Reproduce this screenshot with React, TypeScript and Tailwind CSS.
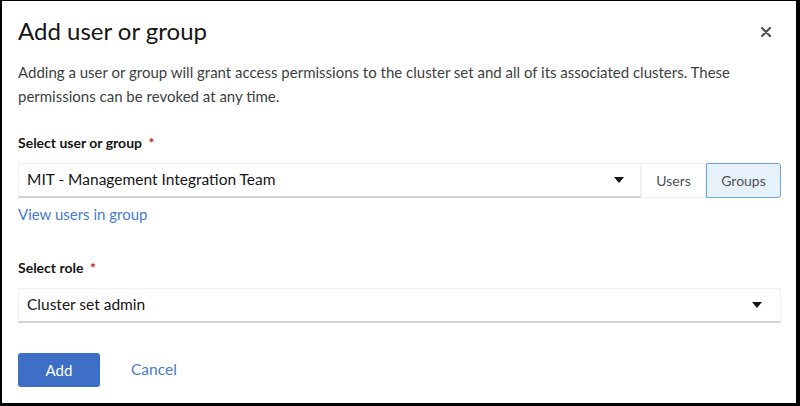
import React, { useState } from 'react';

function Caret() {
  return (
    <svg width="10" height="6" viewBox="0 0 10 6" className="text-[#151515]">
      <path d="M0 0h10L5 6z" fill="currentColor" />
    </svg>
  );
}

function Label({ text }: { text: string }) {
  return (
    <div className="text-[14px] font-bold text-[#151515] leading-[20px] mb-[10px]">
      {text} <span className="text-[#c9190b] ml-[3px]">*</span>
    </div>
  );
}

export default function App() {
  const [kind, setKind] = useState<'users' | 'groups'>('groups');

  return (
    <div
      className="w-[800px] h-[406px] bg-white border-black border-l-2 border-t border-r-4 border-b-[3px] overflow-hidden"
      style={{ fontFamily: 'Lato, "Noto Sans", sans-serif' }}
    >
      <div className="pl-4 pr-[15px] pt-[14px]">
        {/* header */}
        <div className="flex items-center justify-between">
          <h1 className="text-[24px] leading-[32px] text-[#151515]">Add user or group</h1>
          <button className="mr-[10px] mt-[1px] text-[#4f5255]">
            <svg width="10" height="10" viewBox="0 0 10 10">
              <path d="M1 1l8 8M9 1l-8 8" stroke="currentColor" strokeWidth="2.2" strokeLinecap="round" />
            </svg>
          </button>
        </div>

        <p className="mt-[13px] text-[15px] leading-[24px] text-[#3c3f42]">
          Adding a user or group will grant access permissions to the cluster set and all of its associated clusters. These
          permissions can be revoked at any time.
        </p>

        {/* user or group */}
        <div className="mt-[25px]">
          <Label text="Select user or group" />
          <div className="flex">
            <div className="flex-1 h-[35px] flex items-center justify-between pl-[8px] pr-[16px] border border-[#f0f0f0] border-b-[#d2d2d2] border-b-2 text-[15.5px] text-[#151515]">
              <span>MIT - Management Integration Team</span>
              <Caret />
            </div>
            <button
              onClick={() => setKind('users')}
              className={`w-[65px] h-[35px] text-[14px] text-[#4f5255] border ${kind === 'users' ? 'bg-[#e7f1fa] border-[#73a5e0]' : 'border-[#f0f0f0]'}`}
            >
              Users
            </button>
            <button
              onClick={() => setKind('groups')}
              className={`w-[75px] h-[35px] text-[14px] text-[#4f5255] border rounded-r-[3px] ${kind === 'groups' ? 'bg-[#e7f1fa] border-[#73a5e0]' : 'border-[#f0f0f0]'}`}
            >
              Groups
            </button>
          </div>
          <a className="block mt-[6px] text-[15px] leading-[20px] text-[#4a7bd0]">View users in group</a>
        </div>

        {/* role */}
        <div className="mt-[34px]">
          <Label text="Select role" />
          <div className="h-[35px] flex items-center justify-between pl-[8px] pr-[18px] border border-[#f0f0f0] border-b-[#d2d2d2] border-b-2 text-[15.5px] text-[#151515]">
            <span>Cluster set admin</span>
            <Caret />
          </div>
        </div>

        {/* actions */}
        <div className="mt-[30px] flex items-center gap-[15px]">
          <button className="w-[82px] h-[34px] rounded-[3px] bg-[#3d6fc6] text-white text-[15px]">Add</button>
          <button className="px-[16px] h-[34px] text-[#4a7bd0] text-[15.5px]">Cancel</button>
        </div>
      </div>
    </div>
  );
}
